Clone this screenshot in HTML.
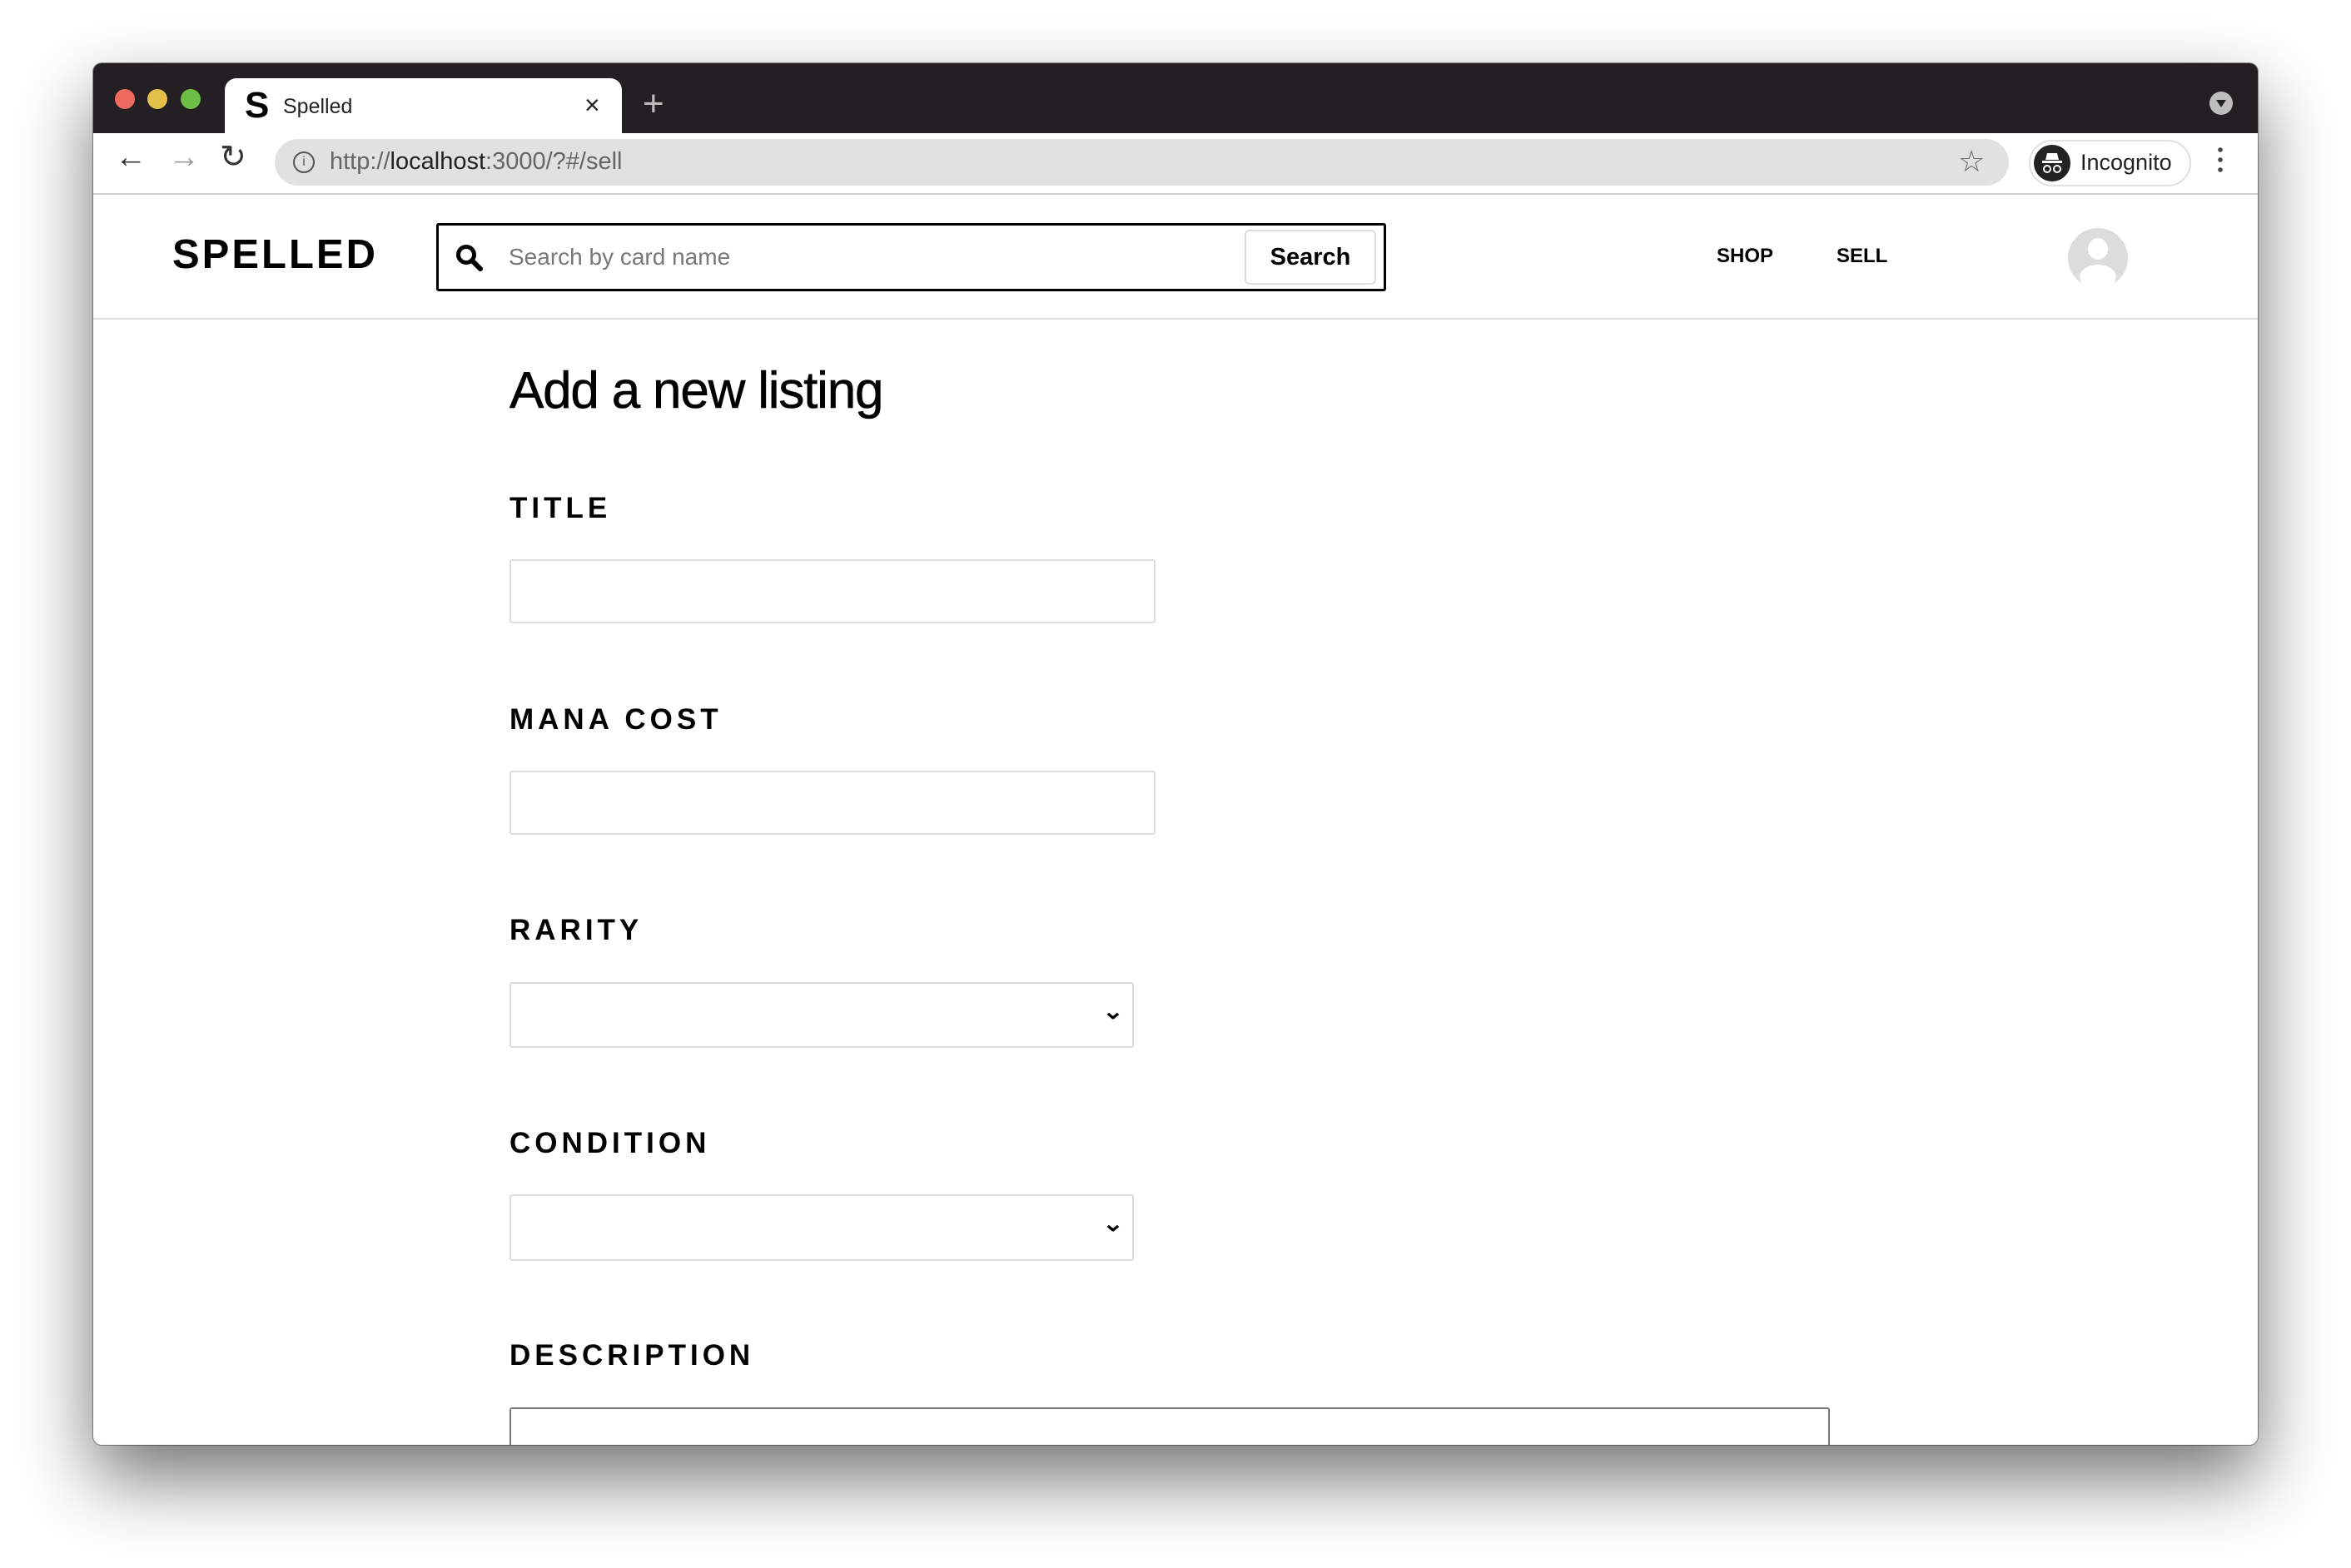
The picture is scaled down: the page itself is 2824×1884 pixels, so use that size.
<!DOCTYPE html>
<html><head><meta charset="utf-8"><style>
*{box-sizing:border-box;margin:0;padding:0}
body{width:2824px;height:1884px;background:#fff;position:relative;overflow:hidden;font-family:"Liberation Sans",sans-serif}
.win{position:absolute;left:112px;top:76px;width:2600px;height:1660px;background:#fff;border-radius:10px;overflow:hidden;box-shadow:0 40px 90px rgba(0,0,0,.55),0 0 0 1px rgba(0,0,0,.4)}
.tabbar{position:absolute;left:0;top:0;width:100%;height:84px;background:#231f22}
.dot{position:absolute;top:31px;width:24px;height:24px;border-radius:50%}
.tab{position:absolute;left:158px;top:18px;width:477px;height:66px;background:#fff;border-radius:14px 14px 0 0}
.abs{position:absolute}
.toolbar{position:absolute;left:0;top:84px;width:100%;height:74px;background:#fff;border-bottom:2px solid #cfcfcf}
.url{position:absolute;left:218px;top:7px;width:2083px;height:56px;background:#e1e1e1;border-radius:28px}
.hdr{position:absolute;left:0;top:158px;width:100%;height:150px;border-bottom:2px solid #dedede}
.lbl{position:absolute;left:500px;font-weight:bold;font-size:35px;letter-spacing:5px;color:#000}
.inp{position:absolute;left:500px;border:2px solid #dcdcdc;border-radius:3px;background:#fff}
</style></head><body>
<div class="win">
 <div class="tabbar">
  <div class="dot" style="left:26px;background:#ee6a5e"></div>
  <div class="dot" style="left:65px;background:#e2c04a"></div>
  <div class="dot" style="left:105px;background:#6cbe45"></div>
  <div class="tab">
   <div class="abs" style="left:24px;top:8px;font-size:44px;font-weight:bold">S</div>
   <div class="abs" style="left:70px;top:20px;font-size:25px;color:#222">Spelled</div>
   <div class="abs" style="left:432px;top:14px;font-size:32px;color:#222">×</div>
  </div>
  <div class="abs" style="left:660px;top:24px;font-size:44px;color:#bbb;font-weight:300">+</div>
  <div class="abs" style="left:2542px;top:34px;width:28px;height:28px;border-radius:50%;background:#bdbdbd"><div class="abs" style="left:8px;top:10px;border-left:6px solid transparent;border-right:6px solid transparent;border-top:9px solid #231f22"></div></div>
 </div>
 <div class="toolbar">
  <div class="abs" style="left:26px;top:8px;font-size:38px;color:#333">←</div>
  <div class="abs" style="left:90px;top:8px;font-size:38px;color:#999">→</div>
  <div class="abs" style="left:152px;top:6px;font-size:38px;color:#333">↻</div>
  <div class="url">
   <div class="abs" style="left:22px;top:15px;width:26px;height:26px;border:2px solid #555;border-radius:50%;font-size:16px;text-align:center;line-height:22px;color:#555">i</div>
   <div class="abs" style="left:66px;top:11px;font-size:29px;color:#666">http://<span style="color:#222">localhost</span>:3000/?#/sell</div>
   <div class="abs" style="left:2022px;top:6px;font-size:36px;color:#666">☆</div>
  </div>
  <div class="abs" style="left:2325px;top:8px;width:195px;height:56px;border:2px solid #e0e0e0;border-radius:28px">
   <svg class="abs" style="left:4px;top:4px" width="44" height="44" viewBox="0 0 44 44"><circle cx="22" cy="22" r="22" fill="#222"/><path d="M16 10h12l2 8h-16z" fill="#fff"/><rect x="10" y="19" width="24" height="3" fill="#fff"/><circle cx="16" cy="29" r="4" fill="none" stroke="#fff" stroke-width="2"/><circle cx="28" cy="29" r="4" fill="none" stroke="#fff" stroke-width="2"/></svg>
   <div class="abs" style="left:60px;top:10px;font-size:27px;color:#222">Incognito</div>
  </div>
  <div class="abs" style="left:2552px;top:14px;width:6px;height:36px;background:radial-gradient(circle,#444 2.5px,transparent 3px) 0 0/6px 12px"></div>
 </div>
 <div class="hdr">
  <div class="abs" style="left:95px;top:44px;font-size:49px;font-weight:bold;letter-spacing:3px">SPELLED</div>
  <div class="abs" style="left:412px;top:34px;width:1141px;height:82px;border:3px solid #000;border-radius:3px">
   <svg class="abs" style="left:20px;top:22px" width="34" height="34" viewBox="0 0 34 34"><circle cx="13" cy="13" r="9.5" fill="none" stroke="#000" stroke-width="5"/><path d="M20 20 L30 30" stroke="#000" stroke-width="6" stroke-linecap="round"/></svg>
   <div class="abs" style="left:84px;top:22px;font-size:28px;color:#777">Search by card name</div>
   <div class="abs" style="left:968px;top:5px;width:158px;height:66px;border:2px solid #ddd;border-radius:6px;font-size:29px;font-weight:bold;text-align:center;line-height:62px">Search</div>
  </div>
  <div class="abs" style="left:1950px;top:60px;font-size:24px;font-weight:bold">SHOP</div>
  <div class="abs" style="left:2094px;top:60px;font-size:24px;font-weight:bold">SELL</div>
  <div class="abs" style="left:2372px;top:40px;width:72px;height:72px;border-radius:50%;background:#dcdcdc;overflow:hidden">
   <div class="abs" style="left:24px;top:12px;width:24px;height:26px;border-radius:50%;background:#fff"></div>
   <div class="abs" style="left:14px;top:44px;width:44px;height:30px;border-radius:50%;background:#fff"></div>
  </div>
 </div>
 <div class="abs" style="left:500px;top:358px;font-size:62px;color:#000;letter-spacing:-1.2px;-webkit-text-stroke:0.6px #000">Add a new listing</div>
 <div class="lbl" style="top:515px">TITLE</div>
 <div class="inp" style="top:596px;width:776px;height:77px"></div>
 <div class="lbl" style="top:769px">MANA COST</div>
 <div class="inp" style="top:850px;width:776px;height:77px"></div>
 <div class="lbl" style="top:1022px">RARITY</div>
 <div class="inp" style="top:1104px;width:750px;height:79px"><div class="abs" style="right:12px;top:18px;font-size:26px;font-weight:bold;transform:scaleX(1.2)">⌄</div></div>
 <div class="lbl" style="top:1278px">CONDITION</div>
 <div class="inp" style="top:1359px;width:750px;height:80px"><div class="abs" style="right:12px;top:18px;font-size:26px;font-weight:bold;transform:scaleX(1.2)">⌄</div></div>
 <div class="lbl" style="top:1533px">DESCRIPTION</div>
 <div class="abs" style="left:500px;top:1615px;width:1586px;height:80px;border:2px solid #777;border-radius:3px"></div>
</div>
</body></html>
